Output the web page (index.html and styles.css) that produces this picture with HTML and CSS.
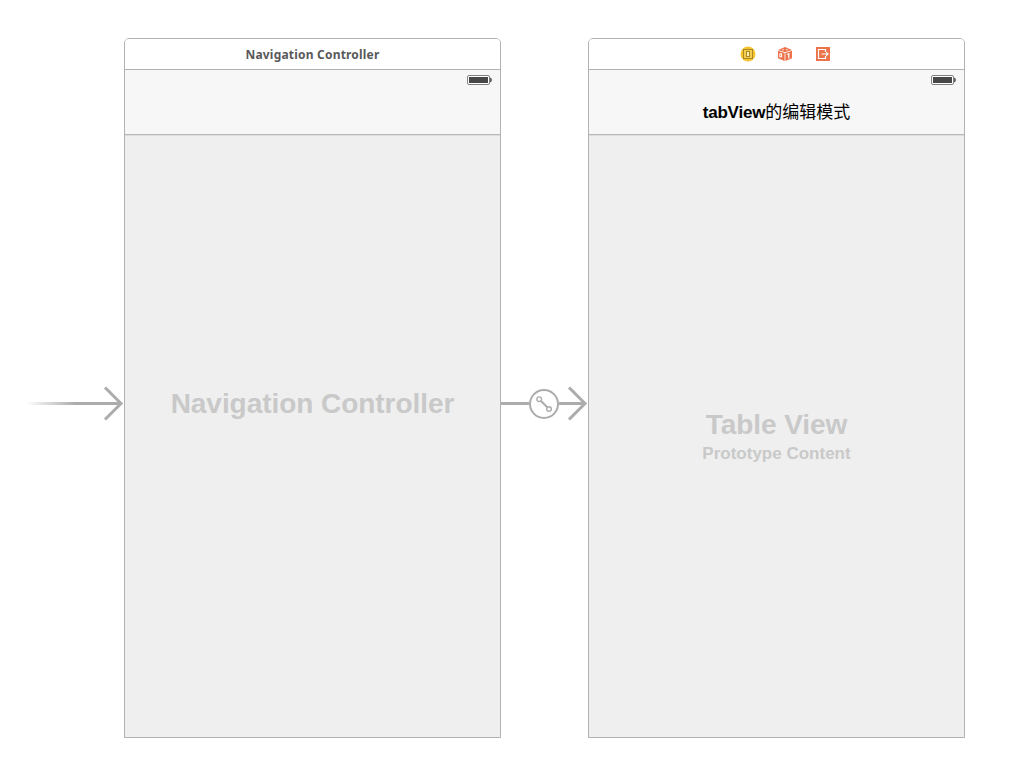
FILE: index.html
```html
<!DOCTYPE html>
<html lang="zh-CN">
<head>
  <meta charset="UTF-8">
  <title>Main.storyboard</title>
  <link rel="stylesheet" href="styles.css">
</head>
<body>
  <div class="canvas">
    <!-- entry point arrow -->
    <div class="entry">
      <svg width="124" height="40" viewBox="0 0 124 40">
        <defs>
          <linearGradient id="fade" gradientUnits="userSpaceOnUse" x1="26" y1="0" x2="76" y2="0">
            <stop offset="0" stop-color="#acacac" stop-opacity="0"/>
            <stop offset="1" stop-color="#acacac"/>
          </linearGradient>
        </defs>
        <rect x="26" y="18" width="95" height="3" fill="url(#fade)"/>
        <path class="line" d="M105 3.5l16 16-16 16"/>
      </svg>
    </div>

    <!-- navigation controller -->
    <div class="scene">
      <div class="dock"><span class="dock-title">Navigation Controller</span></div>
      <div class="navbar">
        <svg class="battery" width="26" height="10" viewBox="0 0 26 10">
          <rect x=".5" y=".5" width="22" height="9" rx="1.5" fill="#fff" stroke="#808080"/>
          <rect x="2" y="2" width="19" height="6" fill="#484848"/>
          <path d="M23 2.6q2 .4 2 2.4t-2 2.4z" fill="#606060"/>
        </svg>
      </div>
      <div class="content">
        <div class="placeholder nav-name">Navigation Controller</div>
      </div>
    </div>

    <!-- root view controller segue -->
    <div class="segue">
      <svg width="87" height="40" viewBox="0 0 87 40">
        <path class="line" d="M0 19.5h28M58 19.5h26M68 3.5l16 16-16 16"/>
        <circle cx="43" cy="20" r="14" fill="#fff" stroke="#acacac" stroke-width="2"/>
        <g fill="none" stroke="#acacac">
          <path d="M40 17l6.5 6.5" stroke-width="2"/>
          <circle cx="38.2" cy="15.2" r="2.3" stroke-width="1.4"/>
          <circle cx="48" cy="25" r="2.3" stroke-width="1.4"/>
        </g>
      </svg>
    </div>

    <!-- table view controller -->
    <div class="scene">
      <div class="dock dock-icons">
        <svg width="16" height="16" viewBox="0 0 16 16">
          <circle cx="8" cy="8" r="7.5" fill="#f6c431"/>
          <g fill="none" stroke="#ad8820">
            <rect x="3.5" y="3.5" width="9" height="9" fill="#f4ce52"/>
            <rect x="6.5" y="5.5" width="3" height="5" fill="#fff0b0"/>
          </g>
        </svg>
        <svg width="16" height="16" viewBox="0 0 16 16">
          <path d="M1 4l7-3 7 3-7 2.3zM1 4.8l6.6 2.3v7.9L1 12.2zM15 4.8L8.4 7.1V15l6.6-2.8z" fill="#ed734a"/>
          <rect x="2.9" y="7.8" width="1.7" height="3" fill="none" stroke="#fff"/>
          <path d="M10.3 8.6l1.5-.8v4.7" fill="none" stroke="#fff" stroke-width="1.2"/>
          <path d="M5 3.8h2M9 3.8h2" stroke="#fff" stroke-width=".8"/>
        </svg>
        <svg width="16" height="16" viewBox="0 0 16 16">
          <rect x="1" y="1" width="14" height="14" fill="#ed734a"/>
          <path d="M10.5 6V3.5h-7v9h7V10M6.5 8h6.5M11.2 6.2L13 8l-1.8 1.8" fill="none" stroke="#fff" stroke-width="1.2"/>
        </svg>
      </div>
      <div class="navbar">
        <svg class="battery" width="26" height="10" viewBox="0 0 26 10">
          <rect x=".5" y=".5" width="22" height="9" rx="1.5" fill="#fff" stroke="#808080"/>
          <rect x="2" y="2" width="19" height="6" fill="#484848"/>
          <path d="M23 2.6q2 .4 2 2.4t-2 2.4z" fill="#606060"/>
        </svg>
        <div class="navbar-title"><b>tabView</b>的编辑模式</div>
      </div>
      <div class="content">
        <div class="placeholder table-name">Table View</div>
        <div class="prototype">Prototype Content</div>
      </div>
    </div>
  </div>
</body>
</html>
```

FILE: styles.css
```css
body {
  margin: 0;
  background: #fff;
  font-family: "Liberation Sans", "Noto Sans CJK SC", sans-serif;
}
.canvas {
  display: flex;
  box-sizing: border-box;
  height: 766px;
  padding-top: 38px;
  overflow: hidden;
}
svg {
  display: block;
}
.entry {
  width: 124px;
  padding-top: 346px;
}
.segue {
  width: 87px;
  padding-top: 346px;
}
.line {
  fill: none;
  stroke: #acacac;
  stroke-width: 3;
}
.scene {
  display: flex;
  flex-direction: column;
  box-sizing: border-box;
  width: 377px;
  height: 700px;
  border: 1px solid #b2b2b2;
  border-radius: 5px 5px 0 0;
  background: #efefef;
  overflow: hidden;
}
.dock {
  display: flex;
  align-items: center;
  justify-content: center;
  height: 30px;
  border-bottom: 1px solid #b2b2b2;
  background: #fff;
}
.dock-icons {
  gap: 21.5px;
  padding-left: 17px;
}
.dock-title {
  padding-top: 2px;
  color: #595959;
  font: bold 12px/28px "Noto Sans", sans-serif;
  letter-spacing: 0.2px;
}
.navbar {
  height: 64px;
  border-bottom: 1px solid #b8b8b8;
  box-shadow: 0 1px 0 #dedede;
  background: #f7f7f7;
}
.battery {
  margin: 5px 7px 0 auto;
}
.navbar-title {
  margin-top: 16px;
  color: #000;
  font-size: 17px;
  line-height: 24px;
  text-align: center;
}
.navbar-title b {
  letter-spacing: -0.2px;
}
.content {
  flex: 1;
  color: #c9c9c9;
  font-weight: bold;
  text-align: center;
}
.placeholder {
  font-size: 28px;
  line-height: 32px;
  letter-spacing: -0.05px;
}
.nav-name {
  margin-top: 253px;
}
.table-name {
  margin-top: 274px;
}
.prototype {
  margin-top: 3px;
  font-size: 17px;
  line-height: 20px;
}
```
